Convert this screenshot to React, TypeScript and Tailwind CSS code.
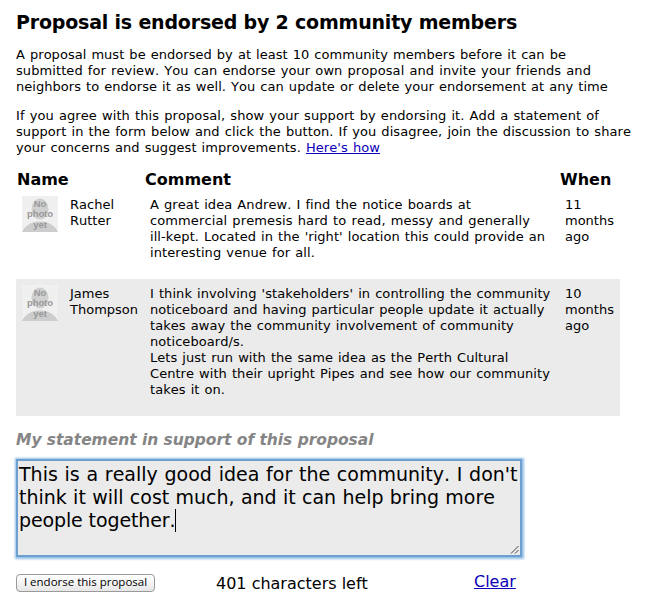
import type { ReactNode } from "react";

function Line({ className = "", children }: { className?: string; children: ReactNode }) {
  return <span className={`block whitespace-nowrap ${className}`}>{children}</span>;
}

function NoPhoto() {
  return (
    <svg width="36" height="36" viewBox="0 0 36 36" className="block">
      <rect width="36" height="36" fill="#f0f0f0" />
      <ellipse cx="18" cy="13" rx="8.5" ry="10.5" fill="#d0d0d0" />
      <path d="M0 36C4 28 11 25.5 18 25.5S32 28 36 36Z" fill="#cdcdcd" />
      <g
        fill="#999"
        textAnchor="middle"
        fontFamily="'Liberation Sans', Arial, sans-serif"
        fontWeight="bold"
        fontSize="9.5"
      >
        <text x="18" y="10.5">No</text>
        <text x="18" y="21.3" textLength="26">photo</text>
        <text x="18" y="32">yet</text>
      </g>
    </svg>
  );
}

interface EndorsementProps {
  first: string;
  last: string;
  months: string;
  shaded?: boolean;
  children: ReactNode;
}

function Endorsement({ first, last, months, shaded, children }: EndorsementProps) {
  return (
    <div className={`flex w-[604px] items-start pb-[18px] pl-1.5 ${shaded ? "bg-[#ebebeb]" : ""}`}>
      <div className="w-12 shrink-0 pt-1.5">
        <NoPhoto />
      </div>
      <div className="w-20 shrink-0 pt-[7px]">
        <Line>{first}</Line>
        <Line>{last}</Line>
      </div>
      <div className="w-[415px] shrink-0 pt-[7px] [word-spacing:0.87px]">{children}</div>
      <div className="pt-[7px]">
        <Line>{months}</Line>
        <Line>months</Line>
        <Line>ago</Line>
      </div>
    </div>
  );
}

export default function App() {
  return (
    <main className="h-[609px] w-[645px] overflow-hidden bg-white pl-4 pt-2.5 font-['DejaVu_Sans',Verdana,sans-serif] text-[13px] leading-4 text-black [font-kerning:none]">
      <h1 className="whitespace-nowrap text-[19px] font-bold leading-6 tracking-[-0.19px]">
        Proposal is endorsed by 2 community members
      </h1>

      <p className="mt-[13px] [word-spacing:0.87px]">
        <Line className="tracking-[0.035px]">A proposal must be endorsed by at least 10 community members before it can be</Line>
        <Line className="tracking-[0.088px]">submitted for review. You can endorse your own proposal and invite your friends and</Line>
        <Line className="tracking-[0.04px]">neighbors to endorse it as well. You can update or delete your endorsement at any time</Line>
      </p>
      <p className="mt-[13px] [word-spacing:0.87px]">
        <Line className="tracking-[0.088px]">If you agree with this proposal, show your support by endorsing it. Add a statement of</Line>
        <Line className="tracking-[0.074px]">support in the form below and click the button. If you disagree, join the discussion to share</Line>
        <Line className="tracking-[0.065px]">
          your concerns and suggest improvements.{" "}
          <a href="#how" className="text-[#0c00b8] underline">Here's how</a>
        </Line>
      </p>

      <div className="mt-[14px] flex pl-px text-base font-bold leading-5">
        <div className="w-32">Name</div>
        <div className="w-[415px]">Comment</div>
        <div>When</div>
      </div>
      <Endorsement first="Rachel" last="Rutter" months="11">
        <Line className="tracking-[0.075px]">A great idea Andrew. I find the notice boards at</Line>
        <Line className="tracking-[0.11px]">commercial premesis hard to read, messy and generally</Line>
        <Line className="tracking-[0.05px]">ill-kept. Located in the 'right' location this could provide an</Line>
        <Line className="tracking-[0.09px]">interesting venue for all.</Line>
      </Endorsement>
      <Endorsement first="James" last="Thompson" months="10" shaded>
        <Line className="tracking-[0.06px]">I think involving 'stakeholders' in controlling the community</Line>
        <Line className="tracking-[0.01px]">noticeboard and having particular people update it actually</Line>
        <Line className="tracking-[0.06px]">takes away the community involvement of community</Line>
        <Line className="tracking-[0.06px]">noticeboard/s.</Line>
        <Line className="tracking-[0.035px]">Lets just run with the same idea as the Perth Cultural</Line>
        <Line className="tracking-[0.05px]">Centre with their upright Pipes and see how our community</Line>
        <Line className="tracking-[0.05px]">takes it on.</Line>
      </Endorsement>

      <h2 className="mt-[14px] whitespace-nowrap text-[15.5px] font-bold italic leading-5 tracking-[-0.04px] text-[#858585]">
        My statement in support of this proposal
      </h2>
      <div className="mt-[9px] flex h-[98px] w-[506px] justify-between border-2 border-[#6ea0cf] bg-[#ebebeb] pl-px pt-0.5 text-[19px] leading-[23px] shadow-[0_0_2px_1.5px_#93bfe6]">
        <div>
          <Line className="[word-spacing:0.7px]">This is a really good idea for the community. I don't</Line>
          <Line className="[word-spacing:0.26px]">think it will cost much, and it can help bring more</Line>
          <Line className="tracking-[-0.12px]">
            people together.
            <span className="inline-block h-[23px] w-px bg-black align-top" />
          </Line>
        </div>
        <svg width="9" height="9" viewBox="0 0 9 9" className="-ml-2 mb-px mr-px shrink-0 self-end" stroke="#444" strokeWidth="1">
          <path d="M1 8.5L8.5 1M5 8.5L8.5 5" />
        </svg>
      </div>

      <div className="mt-[17px] flex items-start text-base leading-5">
        <button className="h-[18px] w-[139px] whitespace-nowrap rounded-[4px] border border-[#9a9a9a] bg-linear-to-b from-white via-[#f4f4f4] to-[#e6e6e6] pb-0.5 font-['Open_Sans',sans-serif] text-[11.5px] font-medium leading-[14px]">
          I endorse this proposal
        </button>
        <span className="ml-[61px] w-[258px]">401 characters left</span>
        <a href="#clear" className="-mt-0.5 text-[#0c00b8] underline">Clear</a>
      </div>
    </main>
  );
}
